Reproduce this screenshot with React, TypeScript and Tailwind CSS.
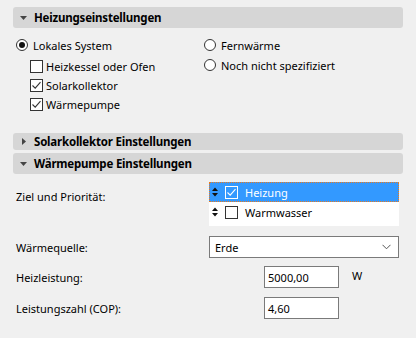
import React from 'react'

function Triangle({ open }: { open: boolean }) {
  return open ? (
    <svg width="9" height="9" viewBox="0 0 9 9" className="shrink-0">
      <path d="M1 3 L8 3 L4.5 7 Z" fill="#444" />
    </svg>
  ) : (
    <svg width="9" height="9" viewBox="0 0 9 9" className="shrink-0">
      <path d="M3 1 L7 4.5 L3 8 Z" fill="#444" />
    </svg>
  )
}

function Section({ title, open, h }: { title: string; open: boolean; h: string }) {
  return (
    <div className={`flex items-center gap-[6px] rounded-[3px] bg-[#d6d6d6] pl-[6px] ${h}`}>
      <Triangle open={open} />
      <span className="text-[11.5px] font-bold tracking-[-0.2px] text-black">{title}</span>
    </div>
  )
}

function Radio({ checked, label }: { checked?: boolean; label: string }) {
  return (
    <div className="flex items-center gap-[5px]">
      <span className="flex h-[12px] w-[12px] items-center justify-center rounded-full border border-[#333] bg-white">
        {checked && <span className="h-[6px] w-[6px] rounded-full bg-[#111]" />}
      </span>
      <span>{label}</span>
    </div>
  )
}

function Check({ checked, white }: { checked?: boolean; white?: boolean }) {
  return (
    <span
      className={`flex h-[13px] w-[13px] shrink-0 items-center justify-center border ${
        white ? 'border-white bg-transparent' : 'border-[#333] bg-white'
      }`}
    >
      {checked && (
        <svg width="11" height="11" viewBox="0 0 11 11">
          <path
            d="M1.5 5.5 L4.2 8.2 L9.5 2.2"
            fill="none"
            stroke={white ? '#fff' : '#333'}
            strokeWidth="1.1"
          />
        </svg>
      )}
    </span>
  )
}

function CheckRow({ checked, label }: { checked?: boolean; label: string }) {
  return (
    <div className="flex h-[19px] items-center gap-[3px] pl-[14px]">
      <Check checked={checked} />
      <span>{label}</span>
    </div>
  )
}

function SortArrows({ color }: { color: string }) {
  return (
    <svg width="6" height="10" viewBox="0 0 6 10" className="shrink-0">
      <path d="M0 4 L3 0.5 L6 4 Z M0 6 L3 9.5 L6 6 Z" fill={color} />
    </svg>
  )
}

export default function App() {
  return (
    <div
      className="h-[338px] w-[416px] bg-[#f0f0f0] px-[13px] pt-[7px] text-[11px] leading-none text-black"
      style={{ fontFamily: '"Noto Sans", "Liberation Sans", sans-serif' }}
    >
      <Section title="Heizungseinstellungen" open h="h-[21px]" />

      <div className="mt-[11px] grid grid-cols-[188px_1fr] pl-[3px]">
        <div className="flex flex-col">
          <div className="flex h-[12px] items-center">
            <Radio checked label="Lokales System" />
          </div>
          <div className="mt-[5px] flex flex-col">
            <div className="flex h-[20px] items-center gap-[3px] pl-[14px]">
              <Check />
              <span>Heizkessel oder Ofen</span>
            </div>
            <CheckRow checked label="Solarkollektor" />
            <CheckRow checked label="Wärmepumpe" />
          </div>
        </div>
        <div className="flex flex-col gap-[8px]">
          <div className="flex h-[12px] items-center">
            <Radio label="Fernwärme" />
          </div>
          <div className="flex h-[12px] items-center">
            <Radio label="Noch nicht spezifiziert" />
          </div>
        </div>
      </div>

      <div className="mt-[19px] flex flex-col gap-[3px]">
        <Section title="Solarkollektor Einstellungen" open={false} h="h-[17px]" />
        <Section title="Wärmepumpe Einstellungen" open h="h-[21px]" />
      </div>

      <div className="mt-[8px] flex flex-col pl-[3px]">
        <div className="flex">
          <span className="w-[193px] pt-[9px]">Ziel und Priorität:</span>
          <div className="flex h-[44px] w-[190px] flex-col bg-white">
            <div className="flex h-[20px] items-center gap-[7px] border border-dotted border-[#e87a1e] bg-[#3399ff] pl-[2px] text-white">
              <SortArrows color="#111" />
              <Check checked white />
              <span>Heizung</span>
            </div>
            <div className="flex h-[20px] items-center gap-[7px] pl-[3px]">
              <SortArrows color="#111" />
              <Check />
              <span>Warmwasser</span>
            </div>
          </div>
        </div>

        <div className="mt-[10px] flex items-center">
          <span className="w-[193px]">Wärmequelle:</span>
          <div className="flex h-[22px] w-[190px] items-center justify-between border border-[#7a7a7a] bg-white pl-[5px] pr-[7px]">
            <span>Erde</span>
            <svg width="9" height="6" viewBox="0 0 9 6">
              <path d="M0.5 0.8 L4.5 4.8 L8.5 0.8" fill="none" stroke="#555" strokeWidth="1" />
            </svg>
          </div>
        </div>

        <div className="mt-[8px] flex items-center">
          <span className="w-[248px]">Heizleistung:</span>
          <div className="flex h-[22px] w-[75px] items-center border border-[#7a7a7a] bg-white pl-[3px]">
            5000,00
          </div>
          <span className="ml-[13px] -mt-[4px]">W</span>
        </div>

        <div className="mt-[9px] flex items-center">
          <span className="w-[248px]">Leistungszahl (COP):</span>
          <div className="flex h-[22px] w-[75px] items-center border border-[#7a7a7a] bg-white pl-[3px]">
            4,60
          </div>
        </div>
      </div>
    </div>
  )
}
